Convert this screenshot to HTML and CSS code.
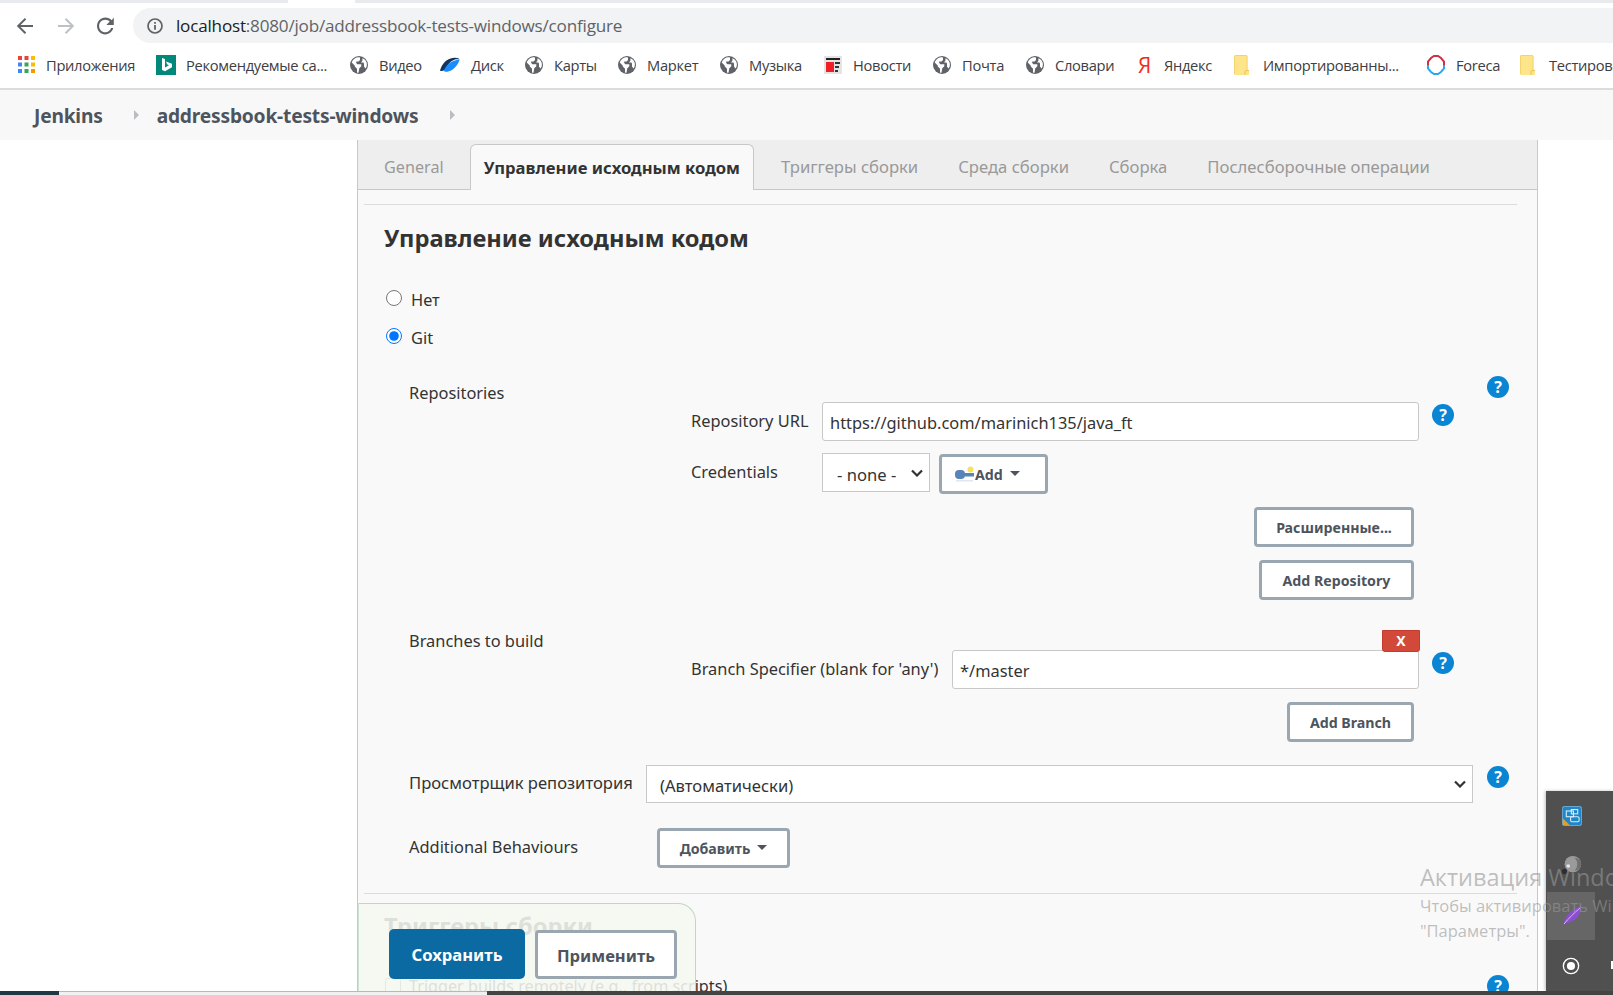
FILE: index.html
```html
<!DOCTYPE html>
<html lang="ru">
<head>
<meta charset="utf-8">
<title>addressbook-tests-windows Config</title>
<link rel="stylesheet" href="styles.css">
</head>
<body>
<svg class="defs" width="0" height="0" aria-hidden="true">
  <symbol id="globe" viewBox="0 0 18 18">
    <circle cx="9" cy="9" r="9" fill="#5f6368"/>
    <path d="M8 1.2C5 1.5 2.6 3.6 1.7 6.4l3 3 .1 1.2 2.2 2.2v3.8c.5.1 1 .2 1.5.2l.8-4.6 2-2V8.2H7.4L6.2 7V5.4h2.4L10 4V1.4C9.3 1.2 8.7 1.2 8 1.2z" fill="#fff"/>
    <path d="M12.4 2.2v2.6L11 6.4h2.4l.6 1.4v2.6l1.4 2.2c1-1.1 1.5-2.6 1.5-4.4 0-2.6-1.6-4.8-4.5-6z" fill="#fff"/>
  </symbol>
  <symbol id="folder" viewBox="0 0 15 20">
    <path d="M1.5 0h10.5c1 0 1.5.6 1.5 1.5V16h1.5v3c0 .6-.4 1-1 1H1.500C.6 20 0 19.400 0 18.500v-17C0 .6.600 0 1.500 0z" fill="#ffe58a"/>
    <path d="M11 20v-3.500c0-.5.400-.9.900-.9h3.100" fill="none" stroke="#e8c25a"/>
    <path d="M.5 19V1.500c0-.6.400-1 1-1h10.500c.6 0 1 .4 1 1V15" fill="none" stroke="#f3d36f"/>
  </symbol>
</svg>

<header class="chrome">
  <div class="tabstrip"><span class="tabstrip-tab"></span></div>
  <div class="toolbar">
    <svg class="nav nav-back" viewBox="0 0 18 18"><path d="M17 8H4.600l5.600-5.600L8.800 1 .8 9l8 8 1.400-1.400L4.600 10H17z" fill="#5f6368"/></svg>
    <svg class="nav nav-forward" viewBox="0 0 18 18"><path d="M1 8h12.400L7.800 2.400 9.200 1l8 8-8 8-1.400-1.400L13.400 10H1z" fill="#bdc1c6"/></svg>
    <svg class="nav nav-reload" viewBox="0 0 18 18"><path d="M15.700 3.300C14.100 1.600 11.800.6 9.300.6 4.700.6 1 4.400 1 9s3.700 8.400 8.300 8.400c3.900 0 7.100-2.700 8-6.300h-2.200c-.9 2.400-3.100 4.200-5.800 4.200C5.900 15.300 3.100 12.500 3.100 9s2.800-6.300 6.200-6.300c1.700 0 3.300.7 4.400 1.900L10.400 8H17.800V.6z" fill="#5f6368"/></svg>
    <div class="omnibox">
      <svg class="info" viewBox="0 0 16 16"><circle cx="8" cy="8" r="7" fill="none" stroke="#5f6368" stroke-width="1.700"/><path d="M7.100 7h1.800v4.700H7.100zM7.100 4h1.800v1.800H7.100z" fill="#5f6368"/></svg>
      <span class="url"><span class="url-host">localhost</span>:8080/job/addressbook-tests-windows/configure</span>
    </div>
  </div>
  <nav class="bookmarks">
    <a class="bm bm-apps">
      <svg class="ic-apps" viewBox="0 0 17 17">
        <rect x="0" y="0" width="4" height="4" fill="#ea4335"/><rect x="6.500" y="0" width="4" height="4" fill="#ea4335"/><rect x="13" y="0" width="4" height="4" fill="#fbbc04"/>
        <rect x="0" y="6.500" width="4" height="4" fill="#4285f4"/><rect x="6.500" y="6.500" width="4" height="4" fill="#34a853"/><rect x="13" y="6.500" width="4" height="4" fill="#fbbc04"/>
        <rect x="0" y="13" width="4" height="4" fill="#4285f4"/><rect x="6.500" y="13" width="4" height="4" fill="#34a853"/><rect x="13" y="13" width="4" height="4" fill="#f29900"/>
      </svg>Приложения</a>
    <a class="bm bm-bing">
      <svg class="ic-bing" viewBox="0 0 20 20"><rect width="20" height="20" fill="#00897b"/><path d="M6 3l3 1v8.500l4-2.300-2-1-1-2.700 6 2.200v3.500l-7 4L6 15z" fill="#fff"/></svg>Рекомендуемые са...</a>
    <a class="bm bm-video"><svg class="ic-globe"><use href="#globe"/></svg>Видео</a>
    <a class="bm bm-disk">
      <svg class="ic-disk" viewBox="0 0 21 16"><path d="M0 14C2 7 7 1 15 .5c3-.2 5.500.6 5.500 2-4-1.500-10 .5-14 9C5 14 2 15 0 14z" fill="#10335f"/><path d="M4 14C7 7 12 3 20.500 2.500 19 8 14 14 8 15c-2 .3-3.500 0-4-1z" fill="#1a8cff"/></svg>Диск</a>
    <a class="bm bm-maps"><svg class="ic-globe"><use href="#globe"/></svg>Карты</a>
    <a class="bm bm-market"><svg class="ic-globe"><use href="#globe"/></svg>Маркет</a>
    <a class="bm bm-music"><svg class="ic-globe"><use href="#globe"/></svg>Музыка</a>
    <a class="bm bm-news">
      <svg class="ic-news" viewBox="0 0 18 18"><rect width="18" height="18" fill="#e4e4e4"/><rect x="2" y="2" width="14" height="2" fill="#222"/><rect x="2" y="6" width="8" height="10" fill="#f01f25"/><rect x="11" y="6" width="5" height="2" fill="#333"/><rect x="11" y="10" width="4" height="2" fill="#333"/><rect x="11" y="14" width="3" height="2" fill="#333"/></svg>Новости</a>
    <a class="bm bm-mail"><svg class="ic-globe"><use href="#globe"/></svg>Почта</a>
    <a class="bm bm-dict"><svg class="ic-globe"><use href="#globe"/></svg>Словари</a>
    <a class="bm bm-ya"><span class="ic-ya">Я</span>Яндекс</a>
    <a class="bm bm-imp"><svg class="ic-folder"><use href="#folder"/></svg>Импортированны...</a>
    <a class="bm bm-foreca">
      <svg class="ic-foreca" viewBox="0 0 20 20"><path d="M2 10V6.500L5 3l3-2h4l3 2 3 3.500V10" fill="none" stroke="#cf3042" stroke-width="2"/><path d="M2 10v3.500L5 17l3 2h4l3-2 3-3.500V10" fill="none" stroke="#29a9ec" stroke-width="2"/></svg>Foreca</a>
    <a class="bm bm-test"><svg class="ic-folder"><use href="#folder"/></svg>Тестирование</a>
  </nav>
</header>

<div class="breadcrumbs">
  <a class="crumb crumb-root">Jenkins</a><span class="crumb-arrow"></span>
  <a class="crumb crumb-job">addressbook-tests-windows</a><span class="crumb-arrow"></span>
</div>

<main class="layout">
  <aside class="sidebar"></aside>
  <section class="panel">
    <div class="tabs">
      <a class="tab tab-first">General</a>
      <a class="tab tab-active">Управление исходным кодом</a>
      <a class="tab tab-after">Триггеры сборки</a>
      <a class="tab">Среда сборки</a>
      <a class="tab">Сборка</a>
      <a class="tab">Послесборочные операции</a>
    </div>
    <hr class="sep sep-top">
    <div class="config">
      <h2 class="title">Управление исходным кодом</h2>

      <label class="radio radio-none"><input type="radio" name="scm">Нет</label>
      <label class="radio radio-git"><input type="radio" name="scm" checked>Git</label>

      <div class="row row-repos">
        <span class="label label-main">Repositories</span>
        <span class="help">?</span>
      </div>

      <div class="sub sub-url">
        <label class="label sub-label sub-label-repo">Repository URL</label>
        <input class="text text-url" type="text" value="https://github.com/marinich135/java_ft">
        <span class="help help-field">?</span>
      </div>

      <div class="sub sub-cred">
        <label class="label sub-label sub-label-repo">Credentials</label>
        <select class="select select-cred"><option>- none -</option></select>
        <button class="btn btn-add" type="button">
          <svg class="ic-key" viewBox="0 0 20 16"><circle cx="15.500" cy="3.500" r="3" fill="#f4e35a"/><rect x="0" y="4" width="10" height="9" rx="4" fill="#5a83b8"/><rect x="8" y="7" width="11" height="3.500" fill="#5a83b8"/><rect x="1" y="14" width="17" height="1.500" fill="#dfe6ee"/></svg>Add<span class="caret"></span>
        </button>
      </div>

      <div class="actions actions-adv"><button class="btn btn-adv" type="button">Расширенные...</button></div>
      <div class="actions actions-repo"><button class="btn btn-repo" type="button">Add Repository</button></div>

      <div class="row row-branches">
        <span class="label label-main">Branches to build</span>
        <button class="btn-x" type="button">X</button>
      </div>
      <div class="sub sub-branch">
        <label class="label sub-label sub-label-branch">Branch Specifier (blank for 'any')</label>
        <input class="text text-branch" type="text" value="*/master">
        <span class="help help-field">?</span>
      </div>
      <div class="actions actions-branch"><button class="btn btn-branch" type="button">Add Branch</button></div>

      <div class="row row-viewer">
        <span class="label label-main label-viewer">Просмотрщик репозитория</span>
        <select class="select select-viewer"><option>(Автоматически)</option></select>
        <span class="help help-viewer">?</span>
      </div>

      <div class="row row-behav">
        <span class="label label-main label-behav">Additional Behaviours</span>
        <button class="btn btn-behav" type="button">Добавить<span class="caret"></span></button>
      </div>
    </div>
    <hr class="sep sep-bottom">
    <div class="config">
      <h2 class="title title-triggers">Триггеры сборки</h2>
      <div class="row row-trigger">
        <label class="trigger"><input type="checkbox">Trigger builds remotely (e.g., from scripts)</label>
        <span class="help">?</span>
      </div>
    </div>
  </section>
  <aside class="gutter"></aside>
</main>

<div class="savebar">
  <button class="btn-save" type="button">Сохранить</button>
  <button class="btn btn-apply" type="button">Применить</button>
</div>

<div class="tray">
  <svg class="tray-ic tray-intel" viewBox="0 0 28 28"><rect x=".5" y=".5" width="27" height="27" rx="3" fill="#1f86c8" stroke="#8fc7ea"/><path d="M1 17l10 10H4c-2 0-3-1-3-3z" fill="#e0a030"/><rect x="6" y="7" width="10" height="8" fill="none" stroke="#d8eefb" stroke-width="1.500"/><rect x="13" y="5" width="9" height="6" fill="none" stroke="#d8eefb" stroke-width="1.500"/><rect x="12" y="15" width="12" height="7" rx="2" fill="none" stroke="#d8eefb" stroke-width="1.500"/></svg>
  <svg class="tray-ic tray-steam" viewBox="0 0 24 24"><circle cx="14" cy="10" r="9" fill="#9a9a9a"/><path d="M16 3a7 7 0 0 1 0 14 10 10 0 0 0 0-14z" fill="#6f6f6f"/><circle cx="5" cy="18" r="3" fill="#2e2e2e"/><circle cx="9" cy="12" r="2" fill="#e8e8e8"/></svg>
  <div class="tray-tile"><svg class="tray-ic" viewBox="0 0 20 20"><path d="M1 19C2 12 9 3 19 0c1 7-4 14-11 16-2 .6-4 .8-5 1z" fill="#8a4fd0"/><path d="M2 18C7 12 12 7 18 2" stroke="#d8b8f5" fill="none"/></svg></div>
  <svg class="tray-ic tray-rec" viewBox="0 0 20 20"><circle cx="10" cy="10" r="8.500" fill="none" stroke="#fff" stroke-width="1.500"/><circle cx="10" cy="10" r="4.500" fill="#fff"/></svg>
  <span class="tray-edge"></span>
</div>

<div class="activation">
  <p class="activation-title">Активация Windows</p>
  <p class="activation-text">Чтобы активировать Windows, перейдите в раздел<br>"Параметры".</p>
</div>

<div class="bottombar">
  <span class="bottom-teal"></span>
  <span class="bottom-light"></span>
  <span class="bottom-dark"></span>
</div>
</body>
</html>
```

FILE: styles.css
```css
* { box-sizing: border-box; }
html, body { margin: 0; height: 995px; overflow: hidden; background: #fff; }
body { font-family: "Noto Sans", "Open Sans", sans-serif; font-size: 16.4px; color: #333; position: relative; width: 1613px; }
.defs { position: absolute; }

/* Browser chrome */
.chrome { background: #fff; }
.tabstrip { height: 3px; background: #e8eaed; position: relative; }
.tabstrip-tab { position: absolute; left: 288px; top: 0; width: 67px; height: 3px; background: #fff; }
.toolbar { height: 40px; display: flex; align-items: flex-start; padding-top: 5px; }
.nav { width: 18px; height: 18px; margin-top: 9px; flex: none; }
.nav-back { margin-left: 16px; }
.nav-forward { margin-left: 23px; }
.nav-reload { margin-left: 21px; }
.omnibox { margin-left: 19px; flex: 1; height: 35px; background: #f1f3f4; border-radius: 18px 0 0 18px; display: flex; align-items: center; padding-left: 14px; }
.info { width: 16px; height: 16px; flex: none; }
.url { margin-left: 13px; font-family: "Open Sans", sans-serif; font-size: 17.1px; letter-spacing: -.2px; color: #5f6368; white-space: nowrap; }
.url-host { color: #202124; }

.bookmarks { height: 47px; border-bottom: 2px solid #dadce0; display: flex; align-items: center; padding: 0 0 2px 18px; overflow: hidden; font-family: "Open Sans", sans-serif; font-size: 14.7px; letter-spacing: -.3px; color: #3c4043; white-space: nowrap; }
.bm { display: flex; align-items: center; flex: none; }
.bm svg { flex: none; }
.ic-apps { width: 17px; height: 17px; margin-right: 11px; }
.ic-bing { width: 20px; height: 20px; margin-right: 10px; }
.ic-globe { width: 18px; height: 18px; margin-right: 11px; }
.ic-disk { width: 20px; height: 16px; margin-right: 11px; }
.ic-news { width: 18px; height: 18px; margin-right: 11px; }
.ic-ya { color: #f32b1b; font-size: 21px; line-height: 20px; width: 14px; margin-right: 12px; }
.ic-folder { width: 15px; height: 20px; margin-right: 14px; }
.ic-foreca { width: 20px; height: 20px; margin-right: 10px; }
.bm-apps { width: 138px; }
.bm-bing { width: 194px; }
.bm-video { width: 90px; }
.bm-disk { width: 85px; }
.bm-maps { width: 93px; }
.bm-market { width: 102px; }
.bm-music { width: 104px; }
.bm-news { width: 109px; }
.bm-mail { width: 93px; }
.bm-dict { width: 112px; }
.bm-ya { width: 96px; }
.bm-imp { width: 192px; }
.bm-foreca { width: 94px; }

/* Breadcrumbs */
.breadcrumbs { height: 50px; background: #f8f8f8; display: flex; align-items: center; padding: 1px 0 0 34px; color: #4d545d; font-weight: 700; font-size: 19.2px; letter-spacing: -.2px; }
.crumb-arrow { width: 0; height: 0; border-left: 5px solid #b9bdc2; border-top: 5px solid transparent; border-bottom: 5px solid transparent; margin-top: -2px; }
.crumb-root + .crumb-arrow { margin-left: 31px; margin-right: 18px; }
.crumb-job + .crumb-arrow { margin-left: 32px; }

/* Main */
.layout { display: flex; height: 855px; }
.sidebar { width: 357px; flex: none; background: #fff; }
.gutter { flex: 1; background: #fff; }
.panel { width: 1181px; flex: none; background: #f9f9f9; border-left: 1px solid #c8c8c8; border-right: 1px solid #c8c8c8; }

.tabs { height: 50px; background: #eee; border-bottom: 1px solid #c8c8c8; display: flex; padding-left: 6px; padding-top: 4px; color: #999; font-size: 16.65px; white-space: nowrap; }
.tab { padding: 0 20px; line-height: 46px; height: 45px; }
.tab-first { font-size: 16.2px; }
.tab-active { height: 46px; margin: 0 7px 0 6px; padding: 0 13px; background: #f9f9f9; border: 1px solid #c8c8c8; border-bottom: 0; border-radius: 6px 6px 0 0; color: #333; font-weight: 700; }

.sep { border: 0; border-top: 1px solid #dcdcdc; margin: 0; margin-left: 6px; width: 1153px; }
.sep-top { margin-top: 14px; }
.sep-bottom { margin-top: 25px; }

.config { margin-left: 26px; width: 1125px; }
.title { margin: 16px 0 0; font-size: 23.7px; line-height: 34px; font-weight: 700; color: #333; }
.radio { display: flex; align-items: center; height: 22px; color: #333; }
.radio input { width: 16px; height: 16px; margin: -2px 9px 0 2px; }
.radio-none { margin-top: 33px; }
.radio-git { margin-top: 16px; }

.row { display: flex; }
.label { color: #333; line-height: 22px; white-space: nowrap; }
.label-main { margin-left: 25px; }
.row-repos { justify-content: space-between; margin-top: 28px; height: 26px; }
.row-repos .label-main { padding-top: 6px; }

.help { flex: none; width: 22px; height: 22px; border-radius: 50%; background: #0a85d3; color: #fff; font-weight: 700; font-size: 16px; line-height: 22px; text-align: center; }
.help-field { margin: 2px 0 0 13px; }

.sub { display: flex; margin-left: 307px; align-items: flex-start; }
.sub-label { flex: none; }
.sub-label-repo { width: 131px; padding-top: 8px; }
.sub-label-branch { width: 261px; padding-top: 8px; }
.sub-cred { margin-top: 12px; height: 41px; }

.text { height: 39px; border: 1px solid #c8c8c8; border-radius: 3px; background: #fff; padding: 1px 7px 0; font: inherit; color: #333; }
.text-url { width: 597px; }
.text-branch { width: 467px; }

.select { appearance: none; height: 39px; border: 1px solid #c8c8c8; border-radius: 0; font: inherit; font-size: 16.6px; color: #333; background: #fff url("data:image/svg+xml,%3Csvg xmlns='http://www.w3.org/2000/svg' width='12' height='8'%3E%3Cpath d='M1 1.500l5 5 5-5' fill='none' stroke='%23333' stroke-width='2.200'/%3E%3C/svg%3E") no-repeat right 6px center; }
.select-cred { width: 108px; padding: 4px 0 0 14px; }
.select-viewer { width: 827px; height: 38px; padding: 3px 0 0 13px; }

.btn { display: inline-flex; align-items: center; justify-content: center; height: 40px; background: #fff; border: 3px solid #9aa7b0; border-radius: 4px; color: #4d545d; font: inherit; font-weight: 700; font-size: 14.2px; padding: 0; }
.btn-add { width: 109px; margin: 1px 0 0 9px; justify-content: flex-start; padding-left: 13px; }
.ic-key { width: 20px; height: 16px; flex: none; }
.caret { display: inline-block; width: 0; height: 0; border-top: 5px solid #4d545d; border-left: 5px solid transparent; border-right: 5px solid transparent; margin-left: 7px; margin-top: -2px; }
.actions { display: flex; justify-content: flex-end; padding-right: 95px; }
.actions-adv { margin-top: 13px; }
.actions-repo { margin-top: 13px; }
.actions-branch { margin-top: 13px; }
.btn-adv { width: 160px; }
.btn-repo { width: 155px; }
.btn-branch { width: 127px; }
.btn-behav { width: 133px; flex: none; }

.row-branches { justify-content: space-between; margin-top: 30px; height: 20px; padding-right: 89px; }
.btn-x { position: relative; z-index: 1; width: 38px; height: 22px; border: 1px solid #c43c30; border-radius: 0 0 3px 3px; background: #d24939; color: #fff; font: inherit; font-weight: 700; font-size: 14px; line-height: 18px; padding: 0; }

.row-viewer { margin-top: 23px; height: 38px; align-items: flex-start; }
.label-viewer { width: 237px; flex: none; padding-top: 7px; font-size: 16.6px; }
.help-viewer { margin: 1px 0 0 14px; }
.row-behav { margin-top: 25px; height: 40px; }
.label-behav { width: 248px; flex: none; padding-top: 8px; }

.title-triggers { margin-top: 15px; }
.row-trigger { justify-content: space-between; margin-top: 32px; }
.trigger { display: flex; align-items: center; color: #333; margin-left: 1px; white-space: nowrap; height: 22px; font-size: 16.2px; }
.trigger input { width: 16px; height: 16px; margin: 0 8px 0 0; }

/* Floating save bar */
.savebar { position: absolute; left: 358px; top: 903px; width: 338px; height: 92px; background: rgba(245, 247, 240, .88); border: 1px solid #bcd8c6; border-left-color: #cfe3d5; border-bottom: 0; border-radius: 0 18px 0 0; display: flex; align-items: flex-start; padding: 25px 0 0 30px; }
.btn-save { width: 136px; height: 50px; background: #0b6aa2; border: 0; border-radius: 5px; color: #fff; font: inherit; font-weight: 700; font-size: 16.6px; padding-top: 2px; }
.btn-apply { width: 142px; height: 49px; margin: 1px 0 0 10px; font-size: 16.6px; padding-top: 2px; }

/* Desktop overlays */
.tray { position: absolute; left: 1546px; top: 791px; width: 67px; height: 200px; background: #505050; box-shadow: -1px 0 3px rgba(0,0,0,.25); }
.tray-ic { position: absolute; }
.tray-intel { left: 16px; top: 15px; width: 20px; height: 20px; }
.tray-steam { left: 14px; top: 64px; width: 22px; height: 22px; }
.tray-tile { position: absolute; left: 1px; top: 101px; width: 48px; height: 48px; background: #666; }
.tray-tile .tray-ic { left: 15px; top: 14px; width: 20px; height: 20px; }
.tray-rec { left: 16px; top: 166px; width: 18px; height: 18px; }
.tray-edge { position: absolute; right: 0; top: 170px; width: 2px; height: 8px; background: #fff; }

.activation { position: absolute; left: 1420px; top: 861px; width: 193px; overflow: hidden; white-space: nowrap; color: rgba(150, 150, 150, .6); font-family: "Open Sans", sans-serif; }
.activation p { margin: 0; }
.activation-title { font-size: 23.5px; line-height: 33px; }
.activation-text { font-size: 16.5px; line-height: 24.5px; margin-top: 5px; }

.bottombar { position: absolute; left: 0; top: 991px; width: 1613px; height: 4px; display: flex; }
.bottom-teal { width: 59px; background: #1f3a45; }
.bottom-light { width: 428px; background: #f1f1f1; border-top: 1px solid #b8b8b8; }
.bottom-dark { flex: 1; background: #444; }
```
